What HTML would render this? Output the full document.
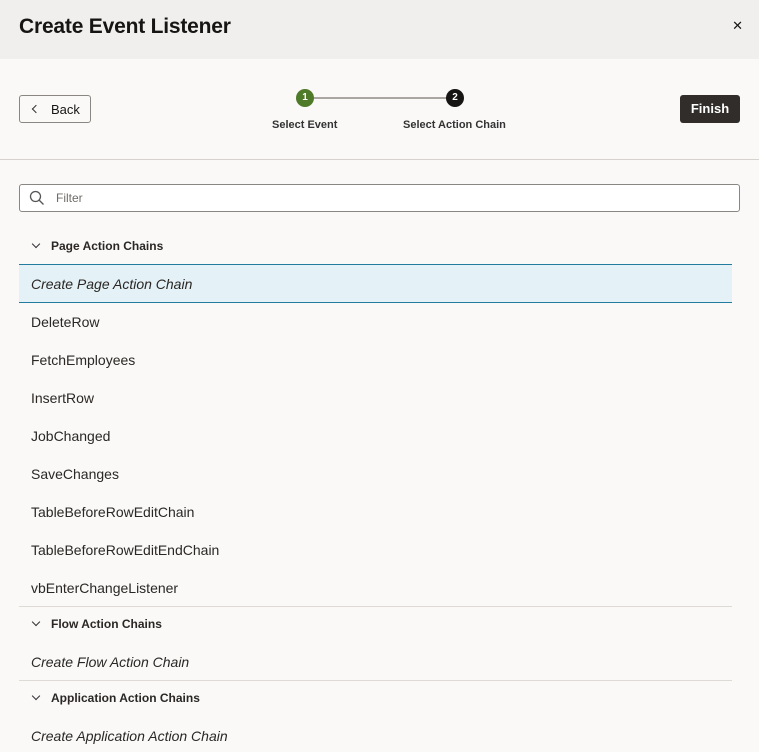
<!DOCTYPE html>
<html><head><style>
body{margin:0;width:759px;height:752px;overflow:hidden;background:#faf9f8;font-family:"Liberation Sans",sans-serif;color:#161513;position:relative}
.hdr{position:absolute;left:0;top:0;width:759px;height:59px;background:#f1efed}
.hdr h1{position:absolute;left:19px;top:15px;margin:0;font-size:21px;font-weight:bold;letter-spacing:-0.2px}
.x{position:absolute;right:16px;top:18px;font-size:13px}
.abs{position:absolute}
.back{left:19px;top:95px;width:70px;height:26px;border:1px solid #8a8783;border-radius:3px;font-size:13px}
.finish{left:680px;top:95px;width:60px;height:28px;background:#312d2a;color:#fff;border-radius:3px;font-size:13px;font-weight:bold;text-align:center;line-height:28px}
.circ{width:18px;height:18px;border-radius:50%;color:#fff;font-size:10px;font-weight:bold;text-align:center;line-height:18px}
.lbl{font-size:11px;font-weight:bold;color:#333}
.div{left:0;top:159px;width:759px;height:1px;background:#d6d3cf}
.filter{left:19px;top:184px;width:719px;height:26px;border:1px solid #8a8783;border-radius:3px;background:#fff}
.grp{position:absolute;left:31px;font-size:12px;font-weight:bold;color:#2a2724}
.item{position:absolute;left:31px;font-size:14px;color:#2a2724}
.it{font-style:italic}
.sep{position:absolute;left:19px;width:713px;height:1px;background:#dedbd7}
.chev{display:inline-block;width:5px;height:5px;border-right:1.5px solid #333;border-bottom:1.5px solid #333;transform:rotate(45deg);margin-right:14px;position:relative;top:-3px;left:2px}
</style></head><body>
<div class="hdr"><h1>Create Event Listener</h1><div class="x">✕</div></div>
<div class="abs back"><span class="abs" style="left:13px;top:10px;width:5px;height:5px;border-left:1.5px solid #333;border-bottom:1.5px solid #333;transform:rotate(45deg)"></span><span class="abs" style="left:31px;top:6px">Back</span></div>
<div class="abs" style="left:305px;top:97px;width:150px;height:2px;background:#aaa7a3"></div>
<div class="abs circ" style="left:296px;top:89px;background:#4e7a2a">1</div>
<div class="abs circ" style="left:446px;top:89px;background:#161513">2</div>
<div class="abs lbl" style="left:272px;top:119px">Select Event</div>
<div class="abs lbl" style="left:403px;top:119px">Select Action Chain</div>
<div class="abs finish">Finish</div>
<div class="abs div"></div>
<div class="abs filter"><svg class="abs" style="left:9px;top:5px" width="16" height="16" viewBox="0 0 16 16"><circle cx="6.5" cy="6.5" r="5" fill="none" stroke="#555" stroke-width="1.3"/><line x1="10" y1="10" x2="14.5" y2="14.5" stroke="#555" stroke-width="1.3"/></svg><span class="abs" style="left:36px;top:6px;font-size:12px;color:#6f6c69">Filter</span></div>
<div class="grp" style="top:239px"><span class="chev"></span>Page Action Chains</div>
<div class="abs" style="left:19px;top:264px;width:713px;height:37px;background:#e4f1f6;border-top:1px solid #227c9e;border-bottom:1px solid #227c9e"></div>
<div class="item it" style="top:276px">Create Page Action Chain</div>
<div class="item" style="top:314px">DeleteRow</div>
<div class="item" style="top:352px">FetchEmployees</div>
<div class="item" style="top:390px">InsertRow</div>
<div class="item" style="top:428px">JobChanged</div>
<div class="item" style="top:466px">SaveChanges</div>
<div class="item" style="top:504px">TableBeforeRowEditChain</div>
<div class="item" style="top:542px">TableBeforeRowEditEndChain</div>
<div class="item" style="top:580px">vbEnterChangeListener</div>
<div class="sep" style="top:606px"></div>
<div class="grp" style="top:617px"><span class="chev"></span>Flow Action Chains</div>
<div class="item it" style="top:654px">Create Flow Action Chain</div>
<div class="sep" style="top:680px"></div>
<div class="grp" style="top:691px"><span class="chev"></span>Application Action Chains</div>
<div class="item it" style="top:728px">Create Application Action Chain</div>
</body></html>
